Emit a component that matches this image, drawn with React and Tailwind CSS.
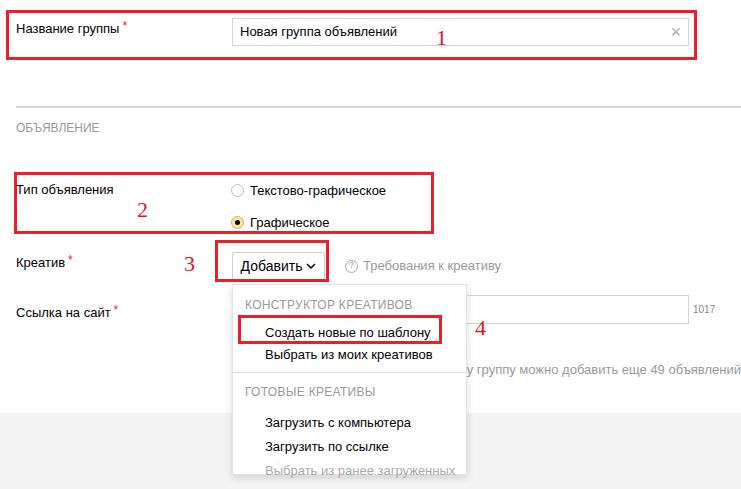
import React from "react";

const FONT = { fontFamily: "'Liberation Sans', Arial, sans-serif" };

function Star() {
  return <span className="text-[#e21f1f] ml-[3px] relative top-[-3px] text-[12px]">*</span>;
}

function Num({ className, children }) {
  return (
    <span
      className={`absolute text-[22px] leading-none text-[#e0141e] ${className}`}
      style={{ fontFamily: "'Liberation Serif', serif" }}
    >
      {children}
    </span>
  );
}

export default function App() {
  return (
    <div className="relative w-[741px] h-[489px] bg-white overflow-hidden text-[13px] text-black" style={FONT}>
      {/* group name */}
      <div className="absolute left-[6px] top-[10px] w-[691px] h-[50px] border-[3px] border-[#e8202a]" />
      <div className="flex pl-[16px] pt-[19px] h-[60px]">
        <div className="w-[216px]">Название группы<Star /></div>
        <div className="w-[457px] h-[28px] border border-[#d4d4d4] flex items-center px-[7px] mt-[-1px]">
          <span className="flex-1">Новая группа объявлений</span>
          <span className="text-[#aaa] text-[18px] font-light leading-none">×</span>
        </div>
      </div>
      <Num className="left-[436px] top-[27px]">1</Num>

      <div className="ml-[16px] mt-[46px] h-[2px] bg-[#d6d6d6]" />
      <div className="ml-[16px] mt-[11px] text-[12px] text-[#999]">ОБЪЯВЛЕНИЕ</div>

      {/* ad type */}
      <div className="absolute left-[14px] top-[172px] w-[420px] h-[62px] border-[3px] border-[#e8202a]" />
      <div className="flex pl-[16px] mt-[43px]">
        <div className="w-[215px]">Тип объявления</div>
        <div className="flex flex-col gap-[12px] pt-[1px]">
          <label className="flex items-center gap-[6px]">
            <span className="w-[13px] h-[13px] rounded-full border border-[#bbb] bg-white" />
            Текстово-графическое
          </label>
          <label className="flex items-center gap-[6px]">
            <span className="w-[13px] h-[13px] rounded-full border border-[#c9b06a] bg-[#ffe6a0] flex items-center justify-center">
              <span className="w-[5px] h-[5px] rounded-full bg-black" />
            </span>
            Графическое
          </label>
        </div>
      </div>
      <Num className="left-[137px] top-[199px]">2</Num>

      {/* creative */}
      <div className="absolute left-[215px] top-[240px] w-[114px] h-[42px] border-[3px] border-[#e8202a]" />
      <div className="flex items-center pl-[16px] mt-[20px]">
        <div className="w-[216px] mt-[-7px]">Креатив<Star /></div>
        <div className="h-[28px] w-[93px] border border-[#cfcfcf] rounded-[2px] flex items-center justify-center gap-[4px] text-[14px]">
          Добавить
          <svg width="10" height="7" viewBox="0 0 10 7"><path d="M1 1l4 4 4-4" fill="none" stroke="#000" strokeWidth="1.5" /></svg>
        </div>
        <div className="flex items-center ml-[20px] text-[#999]">
          <span className="w-[13px] h-[13px] rounded-full border border-[#aaa] text-[9px] flex items-center justify-center mr-[5px]">?</span>
          Требования к креативу
        </div>
      </div>
      <Num className="left-[184px] top-[253px]">3</Num>

      {/* link */}
      <div className="flex pl-[16px] mt-[20px]">
        <div className="w-[216px] pt-[3px]">Ссылка на сайт<Star /></div>
        <div className="w-[457px] h-[29px] border border-[#d4d4d4] mt-[-5px]" />
        <span className="text-[10px] text-[#888] ml-[4px] mt-[2px]">1017</span>
      </div>
      <div className="ml-[232px] mt-[36px] text-[#999] flex">
        <span className="w-[226px]" />
        <span className="whitespace-nowrap">В эту группу можно добавить еще 49 объявлений</span>
      </div>

      <div className="absolute left-0 right-0 top-[413px] bottom-0 bg-[#f4f4f4]" />

      {/* dropdown */}
      <div className="absolute left-[232px] top-[284px] w-[235px] h-[191px] bg-white border border-[#e3e3e3] shadow-[0_3px_8px_rgba(0,0,0,0.15)] pt-[11px]">
        <div className="px-[12px] text-[12px] text-[#999] tracking-[0.3px] h-[17px]">КОНСТРУКТОР КРЕАТИВОВ</div>
        <div className="pl-[32px] mt-[7px] h-[25px] leading-[25px]">Создать новые по шаблону</div>
        <div className="pl-[32px] h-[22px] leading-[20px]">Выбрать из моих креативов</div>
        <div className="h-px bg-[#ddd] mt-[5px]" />
        <div className="px-[12px] text-[12px] text-[#999] mt-[10px] tracking-[0.3px]">ГОТОВЫЕ КРЕАТИВЫ</div>
        <div className="pl-[32px] mt-[12px] h-[24px]">Загрузить с компьютера</div>
        <div className="pl-[32px] h-[24px]">Загрузить по ссылке</div>
        <div className="pl-[32px] h-[24px] text-[#aaa]">Выбрать из ранее загруженных</div>
      </div>
      <div className="absolute left-[238px] top-[315px] w-[204px] h-[29px] border-[3px] border-[#e8202a]" />
      <Num className="left-[475px] top-[317px]">4</Num>
    </div>
  );
}
